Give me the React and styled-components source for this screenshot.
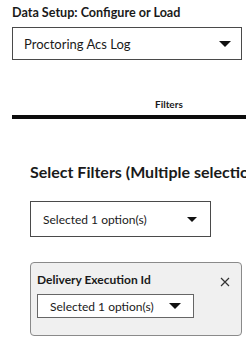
import styled, { createGlobalStyle } from "styled-components";

const GlobalStyle = createGlobalStyle`
  html, body {
    margin: 0;
    padding: 0;
    background: #ffffff;
    overflow: hidden;
  }
  body {
    font-family: Lato, "Noto Sans", sans-serif;
    color: #1a1a1a;
  }
`;

const Page = styled.div`
  width: 246px;
  height: 348px;
  overflow: hidden;
  padding: 6px 0 0 12px;
  box-sizing: border-box;
`;

const Heading = styled.div`
  font-size: 12.6px;
  font-weight: 700;
  line-height: 14px;
  margin-bottom: 7px;
  white-space: nowrap;
`;

const Select = styled.div`
  display: flex;
  align-items: center;
  justify-content: space-between;
  box-sizing: border-box;
  width: ${(p) => p.$width}px;
  height: ${(p) => p.$height}px;
  padding: 0 ${(p) => p.$padRight}px 0 ${(p) => p.$padLeft}px;
  border: 1px solid ${(p) => p.$border || "#4a4a4a"};
  background: #ffffff;
  font-size: ${(p) => p.$size}px;
  color: #1a1a1a;
  white-space: nowrap;
`;

const Arrow = styled.span`
  width: 0;
  height: 0;
  border-left: ${(p) => p.$w / 2}px solid transparent;
  border-right: ${(p) => p.$w / 2}px solid transparent;
  border-top: ${(p) => p.$h}px solid #111111;
`;

const Tabs = styled.div`
  margin-top: 38px;
  width: 260px;
`;

const TabLabel = styled.div`
  font-size: 10px;
  font-weight: 700;
  line-height: 12px;
  padding-left: 143px;
  margin-bottom: 5px;
`;

const TabBar = styled.div`
  height: 4px;
  background: #0d0d0d;
`;

const Section = styled.div`
  padding-left: 18px;
`;

const SectionTitle = styled.div`
  margin-top: 44px;
  font-size: 16px;
  font-weight: 700;
  line-height: 18px;
  white-space: nowrap;
  margin-bottom: 20px;
`;

const Panel = styled.div`
  margin-top: 25px;
  width: 212px;
  height: 74px;
  box-sizing: border-box;
  background: #f0f0f0;
  border: 1px solid #8a8a8a;
  border-radius: 4px;
  padding: 10px 0 0 6px;
`;

const PanelHeader = styled.div`
  display: flex;
  align-items: center;
  justify-content: space-between;
  padding-right: 11px;
  margin-bottom: 7px;
`;

const PanelTitle = styled.div`
  font-size: 12px;
  font-weight: 700;
  line-height: 14px;
`;

const Close = styled.svg`
  width: 10px;
  height: 10px;
  margin-top: 4px;
`;

export default function App() {
  return (
    <>
      <GlobalStyle />
      <Page>
        <Heading>Data Setup: Configure or Load</Heading>
        <Select $width={230} $height={33} $padLeft={11} $padRight={10} $size={13}>
          <span>Proctoring Acs Log</span>
          <Arrow $w={13} $h={6} />
        </Select>
        <Tabs>
          <TabLabel>Filters</TabLabel>
          <TabBar />
        </Tabs>
        <Section>
          <SectionTitle>Select Filters (Multiple selections allowed)</SectionTitle>
          <Select $width={181} $height={36} $padLeft={12} $padRight={13} $size={12}>
            <span>Selected 1 option(s)</span>
            <Arrow $w={10} $h={5} />
          </Select>
          <Panel>
            <PanelHeader>
              <PanelTitle>Delivery Execution Id</PanelTitle>
              <Close viewBox="0 0 10 10">
                <path d="M1 1 L9 9 M9 1 L1 9" stroke="#333" strokeWidth="1.2" fill="none" />
              </Close>
            </PanelHeader>
            <Select $width={157} $height={24} $padLeft={12} $padRight={12} $size={12} $border="#666">
              <span>Selected 1 option(s)</span>
              <Arrow $w={12} $h={6} />
            </Select>
          </Panel>
        </Section>
      </Page>
    </>
  );
}
